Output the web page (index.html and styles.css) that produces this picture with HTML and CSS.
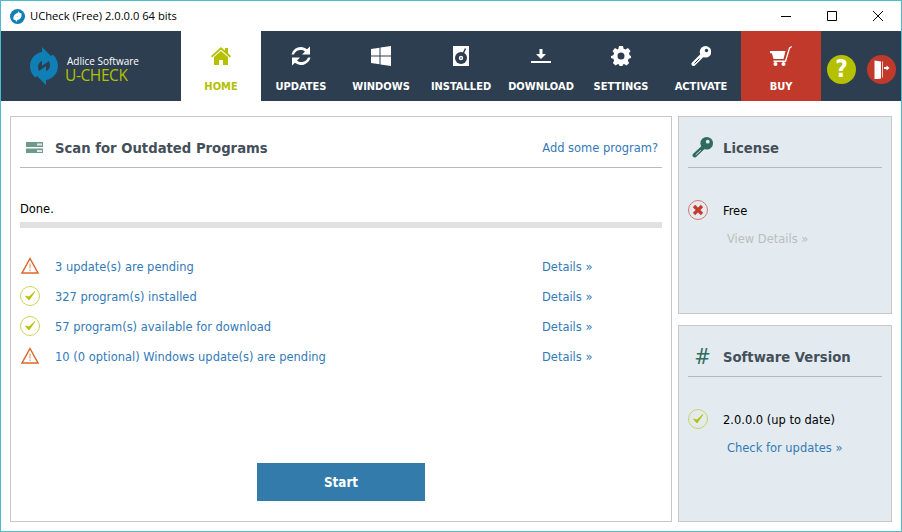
FILE: index.html
```html
<!DOCTYPE html>
<html>
  <head>
    <meta name="viewport" content="width=device-width,initial-scale=1.0">
    <title>UCheck (Free) 2.0.0.0 64 bits</title>
    <link rel="stylesheet" href="styles.css">
  </head>
  <body>
    <div class="window">
      <div class="titlebar">
        <svg class="appIcon" width="15" height="15" viewBox="0 0 38 38">
          <circle cx="19" cy="19" r="19" fill="#0f7fb5"/>
          <path d="M20 5 29 14 19 22V17C15 18 13 21 14 26L10 28C6 21 11 11 20 10Z" fill="#fff"/>
          <path d="M20 5 29 14 19 22V17C15 18 13 21 14 26L10 28C6 21 11 11 20 10Z" fill="#fff" transform="rotate(180 19 19)"/>
        </svg>
        <span class="appTitle">UCheck (Free) 2.0.0.0 64 bits</span>
        <div class="winBtns">
          <span class="winBtn"><svg width="12" height="12" viewBox="0 0 12 12"><path d="M1 6.500h10" stroke="#000" fill="none"/></svg></span>
          <span class="winBtn"><svg width="12" height="12" viewBox="0 0 12 12"><path d="M1.500 1.500h9v9h-9z" stroke="#000" fill="none"/></svg></span>
          <span class="winBtn"><svg width="12" height="12" viewBox="0 0 12 12"><path d="M1 1l10 10M11 1 1 11" stroke="#000" fill="none"/></svg></span>
        </div>
      </div>

      <nav class="nav">
        <div class="logo">
          <svg width="32" height="38" viewBox="0 0 32 38">
            <path d="M12 0 23 11 12 19V14C9 15 8 18 8 20 8 22 9 24 10 25L5.500 30.500C2 28 0 23 0 19 0 12 5 6 12 5Z" fill="#0f7fb5"/>
            <path d="M12 0 23 11 12 19V14C9 15 8 18 8 20 8 22 9 24 10 25L5.500 30.500C2 28 0 23 0 19 0 12 5 6 12 5Z" fill="#0f7fb5" transform="rotate(180 14 19)"/>
          </svg>
          <div class="logoText">
            <div class="logoTop">Adlice Software</div>
            <div class="logoName">U-CHECK</div>
          </div>
        </div>
        <a class="tab active">
          <svg width="20" height="20" viewBox="0 0 20 20"><path d="M10 1 0 10l1.200 1.400L10 3.600l8.800 7.800L20 10l-3-2.700V2h-3v2.600Z" fill="#b5c000"/><path d="M10 5 3 11v8h5v-5h4v5h5v-8Z" fill="#b5c000"/></svg>
          <span>HOME</span>
        </a>
        <a class="tab">
          <svg width="20" height="20" viewBox="0 0 20 20"><path d="M.5 8.500A9.500 9.500 0 0 1 16 3.300L19 .5V8.500H11L14 5.500A7 7 0 0 0 3 8.500Z" fill="#fff"/><path d="M19.500 11.500A9.500 9.500 0 0 1 4 16.700L1 19.500V11.500H9L6 14.500A7 7 0 0 0 17 11.500Z" fill="#fff"/></svg>
          <span>UPDATES</span>
        </a>
        <a class="tab">
          <svg width="20" height="20" viewBox="0 0 20 20"><path d="M0 3 8.500 1.800V9.400H0ZM9.500 1.600 20 0V9.400H9.500ZM0 10.400H8.500V18.200L0 17ZM9.500 10.400H20V20L9.500 18.400Z" fill="#fff"/></svg>
          <span>WINDOWS</span>
        </a>
        <a class="tab">
          <svg width="16" height="20" viewBox="0 0 16 20"><path d="M0 0H16V20H0Z" fill="#fff"/><circle cx="8" cy="12" r="6" fill="#2d3e50"/><circle cx="8" cy="12" r="2.200" fill="#fff"/><circle cx="8" cy="12" r=".8" fill="#2d3e50"/><path d="M10 8 12.500 2.500" stroke="#2d3e50" stroke-width="1.500"/></svg>
          <span>INSTALLED</span>
        </a>
        <a class="tab">
          <svg width="20" height="20" viewBox="0 0 20 20"><path d="M8.500 3h3v5H15l-5 5-5-5h3.500Z" fill="#fff"/><path d="M0 15h20v2H0Z" fill="#fff"/></svg>
          <span>DOWNLOAD</span>
        </a>
        <a class="tab">
          <svg width="20" height="20" viewBox="0 0 20 20"><path fill-rule="evenodd" d="M8 0h4l.6 2.700 1.900.8L17 2l2.500 3-1.500 2.300.6 1.900L20 10v2l-2.400.8-.7 1.900L18.100 17 15.600 19.500 13 18l-1 .5L11.500 20h-3L8 18.500 7 18l-2.600 1.500L1.900 17l1.200-2.300-.7-1.900L0 12v-2l2.400-.8.6-1.900L1.500 5 4 2l2.500 1.500 .9-.8ZM10 6.500a3.500 3.500 0 1 0 0 7 3.500 3.500 0 0 0 0-7Z" fill="#fff"/></svg>
          <span>SETTINGS</span>
        </a>
        <a class="tab">
          <svg width="20" height="20" viewBox="0 0 20 20"><path d="M11 9.500 2.500 18" stroke="#fff" stroke-width="4" stroke-linecap="round"/><path d="M8.500 12.500 3.500 17.500" stroke="#2d3e50" stroke-width="1"/><circle cx="14.500" cy="5.800" r="5.800" fill="#fff"/><circle cx="15.500" cy="4.500" r="1.700" fill="#2d3e50"/></svg>
          <span>ACTIVATE</span>
        </a>
        <a class="tab buy">
          <svg width="22" height="20" viewBox="0 0 22 20"><path d="M0 5h15.500L13.500 13H3.500L2 7.500 0 7Z" fill="#fff"/><path d="M3.500 14.500H15L19 1.500 21.500 0 22 1 20 2.500 16 16H3.500Z" fill="#fff"/><circle cx="5.500" cy="18" r="2" fill="#fff"/><circle cx="13.500" cy="18" r="2" fill="#fff"/></svg>
          <span>BUY</span>
        </a>
        <div class="navRound">
          <span class="round help">?</span>
          <span class="round exit">
            <svg width="20" height="20" viewBox="0 0 20 20"><path d="M2.500 1.500 9 2.500V19.500L2.500 20.500Z" fill="#fff"/><path d="M10.500 2.500V18.500" stroke="#f0c8c0" stroke-width="1"/><path d="M12 8h2.500V6.500L17.500 9 14.500 11.500V10H12Z" fill="#fff"/></svg>
          </span>
        </div>
      </nav>

      <div class="content">
        <section class="panel mainPanel">
          <div class="panelHead">
            <svg class="headIcon" width="17" height="11" viewBox="0 0 17 11"><path d="M0 0h17v5H0Z" fill="#6d9a8c"/><path d="M0 6.500h17v4.500H0Z" fill="#6d9a8c"/><path d="M11 1.500h5v2h-5ZM11 8h5v2h-5Z" fill="#dfe9e5"/></svg>
            <h2>Scan for Outdated Programs</h2>
            <a class="link addLink">Add some program?</a>
          </div>
          <p class="status">Done.</p>
          <div class="progress"></div>
          <ul class="results">
            <li>
              <svg class="rowIcon" width="20" height="20" viewBox="0 0 20 20"><path d="M10 2.500 18 17H2Z" fill="none" stroke="#d9692c" stroke-width="1.500"/><path d="M10 7.500v5M10 13.500v1.500" stroke="#eeb190" stroke-width="1.500"/></svg>
              <a class="link rowText">3 update(s) are pending</a><a class="link">Details »</a>
            </li>
            <li>
              <svg class="rowIcon" width="20" height="20" viewBox="0 0 20 20"><circle cx="10" cy="10" r="9.500" fill="none" stroke="#ccd35c"/><path d="M5.500 10 9 14 15 5.500 9 11Z" fill="#b5c000" stroke="#b5c000" stroke-width=".8"/></svg>
              <a class="link rowText">327 program(s) installed</a><a class="link">Details »</a>
            </li>
            <li>
              <svg class="rowIcon" width="20" height="20" viewBox="0 0 20 20"><circle cx="10" cy="10" r="9.500" fill="none" stroke="#ccd35c"/><path d="M5.500 10 9 14 15 5.500 9 11Z" fill="#b5c000" stroke="#b5c000" stroke-width=".8"/></svg>
              <a class="link rowText">57 program(s) available for download</a><a class="link">Details »</a>
            </li>
            <li>
              <svg class="rowIcon" width="20" height="20" viewBox="0 0 20 20"><path d="M10 2.500 18 17H2Z" fill="none" stroke="#d9692c" stroke-width="1.500"/><path d="M10 7.500v5M10 13.500v1.500" stroke="#eeb190" stroke-width="1.500"/></svg>
              <a class="link rowText">10 (0 optional) Windows update(s) are pending</a><a class="link">Details »</a>
            </li>
          </ul>
          <button class="startBtn">Start</button>
        </section>

        <aside class="side">
          <section class="panel sidePanel licensePanel">
            <div class="panelHead">
              <svg class="sideIcon" width="21" height="21" viewBox="0 0 20 20"><path d="M11 9.500 2.500 17.500" stroke="#2f6b5e" stroke-width="4" stroke-linecap="round"/><path d="M8.500 12.500 3.500 17" stroke="#e3ebf0" stroke-width=".8"/><circle cx="14" cy="6" r="6" fill="#2f6b5e"/><circle cx="15" cy="4.500" r="1.800" fill="#e3ebf0"/></svg>
              <h2>License</h2>
            </div>
            <div class="sideRow">
              <svg class="rowIcon" width="20" height="20" viewBox="0 0 20 20"><circle cx="10" cy="10" r="9.500" fill="none" stroke="#d9756a"/><path d="M6 6l8 8M14 6l-8 8" stroke="#c8392b" stroke-width="3.200"/></svg>
              <span>Free</span>
            </div>
            <a class="sideLink muted">View Details »</a>
          </section>
          <section class="panel sidePanel">
            <div class="panelHead">
              <span class="hash">#</span>
              <h2>Software Version</h2>
            </div>
            <div class="sideRow">
              <svg class="rowIcon" width="20" height="20" viewBox="0 0 20 20"><circle cx="10" cy="10" r="9.500" fill="none" stroke="#ccd35c"/><path d="M5.500 10 9 14 15 5.500 9 11Z" fill="#b5c000" stroke="#b5c000" stroke-width=".8"/></svg>
              <span>2.0.0.0 (up to date)</span>
            </div>
            <a class="sideLink">Check for updates »</a>
          </section>
        </aside>
      </div>
    </div>
  </body>
</html>
```

FILE: styles.css
```css
html, body {
  margin: 0;
  padding: 0;
}
body {
  font-family: "DejaVu Sans Condensed", "DejaVu Sans", Verdana, sans-serif;
  font-size: 12.75px;
  color: #000;
  background-color: #fff;
}
.window {
  width: 902px;
  height: 532px;
  box-sizing: border-box;
  border: 1px solid #4fbccd;
  display: flex;
  flex-direction: column;
  overflow: hidden;
}
.titlebar {
  height: 30px;
  display: flex;
  align-items: center;
  padding-left: 9px;
}
.appIcon {
  margin-right: 5px;
}
.appTitle {
  font-family: "Open Sans", sans-serif;
  font-size: 11.2px;
  margin-top: -2px;
}
.winBtns {
  margin-left: auto;
  display: flex;
}
.winBtn {
  width: 46px;
  height: 30px;
  display: flex;
  align-items: center;
  justify-content: center;
}

.nav {
  height: 70px;
  background-color: #2d3e50;
  display: flex;
}
.logo {
  width: 180px;
  display: flex;
  align-items: center;
  padding-left: 29px;
  box-sizing: border-box;
}
.logoText {
  margin: 6px 0 0 3px;
  font-family: "Open Sans", sans-serif;
}
.logoTop {
  color: #fff;
  font-size: 10px;
  line-height: 13px;
  margin-left: 2px;
}
.logoName {
  color: #b5c000;
  font-size: 15.5px;
  line-height: 15px;
  letter-spacing: -.4px;
}
.tab {
  width: 80px;
  display: flex;
  flex-direction: column;
  align-items: center;
  color: #fff;
  font-weight: bold;
  font-size: 11px;
  padding-top: 15px;
  box-sizing: border-box;
}
.tab svg {
  height: 20px;
}
.tab span {
  margin-top: 15px;
  line-height: 12px;
}
.tab.active {
  background-color: #fff;
  color: #b5c000;
}
.tab.buy {
  background-color: #c0392b;
}
.navRound {
  flex: 1;
  display: flex;
  align-items: center;
  justify-content: space-between;
  padding: 6px 5px 0 6px;
}
.round {
  width: 29px;
  height: 29px;
  border-radius: 50%;
  display: flex;
  align-items: center;
  justify-content: center;
}
.help {
  background-color: #b5c000;
  color: #fff;
  font-weight: bold;
  font-size: 24px;
}
.exit {
  background-color: #c0392b;
}

.content {
  flex: 1;
  display: flex;
  padding: 15px 9px 9px 9px;
  gap: 6px;
}
.panel {
  border: 1px solid #c8c8c8;
  padding: 0 9px;
  box-sizing: border-box;
}
.mainPanel {
  width: 662px;
  display: flex;
  flex-direction: column;
}
.side {
  width: 214px;
  display: flex;
  flex-direction: column;
  gap: 11px;
}
.sidePanel {
  flex: 1;
  background-color: #e3ebf0;
}
.licensePanel {
  flex: none;
  height: 198px;
}
.panelHead {
  height: 51px;
  padding-top: 10px;
  box-sizing: border-box;
  border-bottom: 1px solid #b9b9b9;
  display: flex;
  align-items: center;
}
.panelHead h2 {
  margin: 0;
  font-size: 14.7px;
  font-weight: bold;
  color: #444f5a;
}
.headIcon {
  margin: 0 12px 0 6px;
}
.addLink {
  margin: 0 4px 0 auto;
}
.link {
  color: #337ab7;
}
.status {
  margin: 33px 0 0;
  line-height: 15px;
}
.progress {
  height: 6px;
  margin-top: 6px;
  background-color: #e1e1e1;
}
.results {
  list-style: none;
  margin: 23px 0 0;
  padding: 0;
}
.results li {
  height: 30px;
  display: flex;
  align-items: center;
}
.rowIcon {
  margin-right: 15px;
  flex: none;
}
.rowText {
  width: 487px;
}
.startBtn {
  align-self: center;
  margin-top: auto;
  margin-bottom: 20px;
  width: 168px;
  height: 38px;
  border: none;
  background-color: #337bab;
  color: #fff;
  font-family: inherit;
  font-size: 13.3px;
  font-weight: bold;
}
.sideIcon {
  margin: 0 10px 0 4px;
}
.hash {
  width: 35px;
  margin-left: -3px;
  margin-right: 3px;
  text-align: center;
  font-size: 22px;
  color: #2f6b5e;
}
.sideRow {
  display: flex;
  align-items: center;
  margin-top: 32px;
  height: 20px;
}
.sideLink {
  display: block;
  margin: 12px 0 0 39px;
  color: #337ab7;
  line-height: 14px;
}
.sideLink.muted {
  color: #bdbdbd;
}
```
